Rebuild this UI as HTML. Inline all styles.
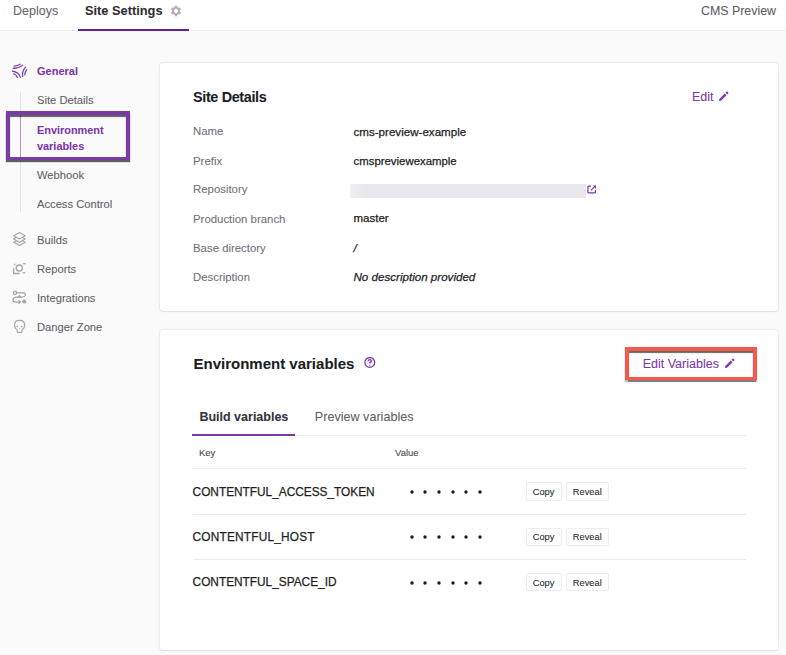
<!DOCTYPE html>
<html><head><meta charset="utf-8"><style>
html,body{margin:0;padding:0;width:786px;height:655px;overflow:hidden;background:#fafafa;font-family:"Liberation Sans",sans-serif;position:relative}
.t{position:absolute;white-space:nowrap;line-height:1;-webkit-text-stroke:0.08px currentColor}
.btn{position:absolute;border:1px solid #ececef;border-radius:2px;background:#fff}
</style></head><body>
<div style="position:absolute;left:0;top:0;width:786px;height:30px;background:#fff;border-bottom:1px solid #eeeef0"></div><div class="t" style="left:13px;top:5.02px;font-size:12.5px;color:#66666e;font-weight:normal;font-style:normal;">Deploys</div>
<div class="t" style="left:85px;top:4.76px;font-size:12.8px;color:#2e2e36;font-weight:bold;font-style:normal;">Site Settings</div>
<div class="t" style="left:701px;top:5.20px;font-size:12.4px;color:#5c5c64;font-weight:normal;font-style:normal;">CMS Preview</div>
<div style="position:absolute;left:78px;top:28.5px;width:111px;height:2px;background:#62239a"></div><svg style="position:absolute;left:170px;top:5px" width="12" height="12" viewBox="-6 -6 12 12"><rect x="-1.3" y="-5.2" width="2.6" height="3" rx="0.5" transform="rotate(0)" fill="#b3b3b8"/><rect x="-1.3" y="-5.2" width="2.6" height="3" rx="0.5" transform="rotate(60)" fill="#b3b3b8"/><rect x="-1.3" y="-5.2" width="2.6" height="3" rx="0.5" transform="rotate(120)" fill="#b3b3b8"/><rect x="-1.3" y="-5.2" width="2.6" height="3" rx="0.5" transform="rotate(180)" fill="#b3b3b8"/><rect x="-1.3" y="-5.2" width="2.6" height="3" rx="0.5" transform="rotate(240)" fill="#b3b3b8"/><rect x="-1.3" y="-5.2" width="2.6" height="3" rx="0.5" transform="rotate(300)" fill="#b3b3b8"/><circle cx="0" cy="0" r="3.1" fill="none" stroke="#b3b3b8" stroke-width="1.9"/></svg><div class="t" style="left:37px;top:66.39px;font-size:11px;color:#7a38a8;font-weight:bold;font-style:normal;">General</div>
<svg style="position:absolute;left:8px;top:58px" width="24" height="24" viewBox="0 0 24 24" fill="none" stroke="#7a38a8" stroke-width="1.2" stroke-linecap="round">
<path d="M6.2 8.1 Q9.5 7.8 12.1 6.2"/><path d="M5.1 10.4 Q10.5 10.5 14.7 7.1"/>
<path d="M4.4 13.2 Q10.5 14 12.5 19.4"/><path d="M5.5 15.8 Q8.3 16.8 9.5 19.4"/>
<path d="M17.6 9.2 Q14 13 14.7 18.3"/><path d="M18.7 11.7 Q16.8 14 16.8 16.8"/>
</svg><div style="position:absolute;left:20px;top:92px;width:1px;height:120px;background:#e2e2e7"></div><div style="position:absolute;left:20px;top:115px;width:1px;height:42px;background:#b68fd2"></div><div class="t" style="left:37px;top:95.22px;font-size:11.2px;color:#5e5e66;font-weight:normal;font-style:normal;">Site Details</div>
<div class="t" style="left:37px;top:124.67px;font-size:10.9px;color:#7a38a8;font-weight:bold;font-style:normal;">Environment</div>
<div class="t" style="left:37px;top:140.67px;font-size:10.9px;color:#7a38a8;font-weight:bold;font-style:normal;">variables</div>
<div class="t" style="left:37px;top:170.02px;font-size:11.2px;color:#5e5e66;font-weight:normal;font-style:normal;">Webhook</div>
<div class="t" style="left:37px;top:198.82px;font-size:11.2px;color:#5e5e66;font-weight:normal;font-style:normal;">Access Control</div>
<div class="t" style="left:37px;top:234.62px;font-size:11.2px;color:#5e5e66;font-weight:normal;font-style:normal;">Builds</div>
<div class="t" style="left:37px;top:263.62px;font-size:11.2px;color:#5e5e66;font-weight:normal;font-style:normal;">Reports</div>
<div class="t" style="left:37px;top:292.92px;font-size:11.2px;color:#5e5e66;font-weight:normal;font-style:normal;">Integrations</div>
<div class="t" style="left:37px;top:321.82px;font-size:11.2px;color:#5e5e66;font-weight:normal;font-style:normal;">Danger Zone</div>
<svg style="position:absolute;left:12px;top:231px" width="15" height="16" viewBox="12 231 15 16" fill="none" stroke="#a4a4aa" stroke-width="1.1" stroke-linejoin="round">
<path d="M19.4 232.4 L25.2 235.7 L19.4 239 L13.6 235.7 Z"/><path d="M16.5 237.35 L13.6 239 L19.4 242.3 L25.2 239 L22.3 237.35"/><path d="M16.5 240.65 L13.6 242.3 L19.4 245.6 L25.2 242.3 L22.3 240.65"/>
</svg><svg style="position:absolute;left:12px;top:261px" width="16" height="15" viewBox="12 261 16 15" fill="none" stroke="#a4a4aa" stroke-width="1.3">
<path d="M13.6 268.2 V273.5 H19.6"/><circle cx="19.3" cy="268.1" r="3.1"/><path d="M14.1 264.4 h1.3"/><path d="M23 263.7 h2.6"/><path d="M22.6 272.8 h2.6"/>
</svg><svg style="position:absolute;left:12px;top:290px" width="16" height="15" viewBox="12 290 16 15" fill="none" stroke="#a4a4aa" stroke-width="1.25" stroke-linecap="round" stroke-linejoin="round">
<circle cx="15" cy="292.8" r="1.6"/><path d="M16.8 292.8 H23.2 Q25.6 293 25.4 295 Q25 297 22 297 H16 Q13 297.5 13 299.7 Q13 302 16 302 H20"/><path d="M19 300.7 L20.4 302 L19 303.3"/><circle cx="24.2" cy="301.5" r="2" fill="#a4a4aa" stroke="none"/><path d="M18.2 297.4 L19.5 295.5 L20.8 297.4"/>
</svg><svg style="position:absolute;left:12px;top:318px" width="16" height="16" viewBox="12 318 16 16" fill="none" stroke="#a4a4aa" stroke-width="1.15" stroke-linejoin="round">
<path d="M17.3 332.3 V329.8 Q14.5 328.4 14.5 325.1 Q14.6 320.3 19.6 320.3 Q24.6 320.3 24.7 325.1 Q24.7 328.4 21.9 329.8 V332.3 Z"/>
<ellipse cx="17.4" cy="326.6" rx="1" ry="0.8" fill="#a4a4aa" stroke="none"/><ellipse cx="21.8" cy="326.6" rx="1" ry="0.8" fill="#a4a4aa" stroke="none"/><path d="M19.6 327.6 l-0.7 1.1 h1.4 z" fill="#a4a4aa" stroke="none"/>
</svg><div style="position:absolute;left:6px;top:111px;width:116px;height:42px;border-style:solid;border-color:#7b3ba6;border-width:4px 4px 3px 4px;box-shadow:0 2px 1px rgba(0,0,0,0.62), inset 0 2px 1px rgba(0,0,0,0.62)"></div><div style="position:absolute;left:160px;top:62.5px;width:618px;height:248.5px;background:#fff;border-radius:3px;box-shadow:0 0 0 1px rgba(20,20,40,0.04), 0 0 2px 1px rgba(0,0,0,0.03), 0 1px 1px rgba(20,20,40,0.05)"></div><div style="position:absolute;left:160px;top:329.5px;width:618px;height:320px;background:#fff;border-radius:3px;box-shadow:0 0 0 1px rgba(20,20,40,0.04), 0 0 2px 1px rgba(0,0,0,0.03), 0 1px 1px rgba(20,20,40,0.05)"></div><div class="t" style="left:193px;top:89.61px;font-size:14.4px;color:#1d1d24;font-weight:bold;font-style:normal;letter-spacing:-0.35px;">Site Details</div>
<div class="t" style="left:692px;top:90.72px;font-size:12.5px;color:#7a38a8;font-weight:normal;font-style:normal;">Edit</div>
<svg style="position:absolute;left:717.6px;top:91px" width="11" height="11" viewBox="0 0 11 11" fill="#7a38a8"><path d="M1 10 L1.3 8 L6.8 2.5 L8.5 4.2 L3 9.7 Z"/><path d="M7.5 1.8 L8.5 0.8 Q9 0.4 9.5 0.8 L10.2 1.5 Q10.6 2 10.2 2.5 L9.2 3.5 Z"/></svg><div class="t" style="left:193px;top:125.65px;font-size:11.4px;color:#707077;font-weight:normal;font-style:normal;">Name</div>
<div class="t" style="left:193px;top:155.85px;font-size:11.4px;color:#707077;font-weight:normal;font-style:normal;">Prefix</div>
<div class="t" style="left:193px;top:184.45px;font-size:11.4px;color:#707077;font-weight:normal;font-style:normal;">Repository</div>
<div class="t" style="left:193px;top:213.55px;font-size:11.4px;color:#707077;font-weight:normal;font-style:normal;">Production branch</div>
<div class="t" style="left:193px;top:242.85px;font-size:11.4px;color:#707077;font-weight:normal;font-style:normal;">Base directory</div>
<div class="t" style="left:193px;top:272.05px;font-size:11.4px;color:#707077;font-weight:normal;font-style:normal;">Description</div>
<div class="t" style="left:353.5px;top:126.38px;font-size:11.6px;color:#1e1e24;font-weight:normal;font-style:normal;-webkit-text-stroke:0.25px currentColor;">cms-preview-example</div>
<div class="t" style="left:353.5px;top:155.85px;font-size:11.4px;color:#1e1e24;font-weight:normal;font-style:normal;-webkit-text-stroke:0.25px currentColor;">cmspreviewexample</div>
<div style="position:absolute;left:350px;top:184px;width:235.5px;height:14px;background:linear-gradient(to right,#f1f0f3 0,#ebe9ee 10px,#e9e7ec 14px)"></div><svg style="position:absolute;left:586px;top:184px" width="11" height="11" viewBox="0 0 11 11" fill="none" stroke="#7a38a8" stroke-width="1.2"><path d="M5 2.2 H2.6 Q1.9 2.2 1.9 2.9 V8.2 Q1.9 8.9 2.6 8.9 H8.7 Q9.4 8.9 9.4 8.2 V6"/><path d="M4.9 6.3 L8.6 2.6"/><path d="M6.8 1.5 H10 V4.7 Z" fill="#7a38a8" stroke="none"/></svg><div class="t" style="left:353.5px;top:213.47px;font-size:11.5px;color:#1e1e24;font-weight:normal;font-style:normal;-webkit-text-stroke:0.25px currentColor;">master</div>
<div class="t" style="left:353.5px;top:242.77px;font-size:11.5px;color:#1e1e24;font-weight:normal;font-style:italic;-webkit-text-stroke:0.25px currentColor;">/</div>
<div class="t" style="left:353.5px;top:271.28px;font-size:11.6px;color:#1e1e24;font-weight:normal;font-style:italic;-webkit-text-stroke:0.25px currentColor;">No description provided</div>
<div class="t" style="left:193.5px;top:356.40px;font-size:15px;color:#1d1d24;font-weight:bold;font-style:normal;">Environment variables</div>
<svg style="position:absolute;left:363px;top:356px" width="14" height="14" viewBox="0 0 14 14" fill="none" stroke="#7a38a8" stroke-width="1.3"><circle cx="6.8" cy="6.4" r="4.9"/><path d="M5.2 5.2 Q5.2 3.6 6.8 3.6 Q8.4 3.6 8.4 5 Q8.4 6 6.8 6.6 V7.6" stroke-width="1.45"/><circle cx="6.8" cy="9.2" r="0.6" fill="#7a38a8" stroke="none"/></svg><div style="position:absolute;left:625px;top:347px;width:124px;height:26px;border-style:solid;border-color:#f35a4d;border-width:4px 4px 3.5px 4px;box-shadow:0 1.5px 1px rgba(0,0,0,0.5), inset 0 2px 1px rgba(0,0,0,0.6)"></div><div class="t" style="left:642.7px;top:358.02px;font-size:12.5px;color:#7a38a8;font-weight:normal;font-style:normal;">Edit Variables</div>
<svg style="position:absolute;left:723.6px;top:357.5px" width="11" height="11" viewBox="0 0 11 11" fill="#7a38a8"><path d="M1 10 L1.3 8 L6.8 2.5 L8.5 4.2 L3 9.7 Z"/><path d="M7.5 1.8 L8.5 0.8 Q9 0.4 9.5 0.8 L10.2 1.5 Q10.6 2 10.2 2.5 L9.2 3.5 Z"/></svg><div class="t" style="left:199.4px;top:411.02px;font-size:12.5px;color:#34343c;font-weight:bold;font-style:normal;">Build variables</div>
<div class="t" style="left:314.8px;top:410.93px;font-size:12.6px;color:#606068;font-weight:normal;font-style:normal;">Preview variables</div>
<div style="position:absolute;left:193px;top:435px;width:553px;height:1px;background:#ebebee"></div><div style="position:absolute;left:192px;top:434px;width:103px;height:2px;background:#7a38a8"></div><div class="t" style="left:199px;top:448.06px;font-size:9.5px;color:#44444c;font-weight:normal;font-style:normal;">Key</div>
<div class="t" style="left:395px;top:448.06px;font-size:9.5px;color:#44444c;font-weight:normal;font-style:normal;">Value</div>
<div style="position:absolute;left:193px;top:468px;width:553px;height:1px;background:#ebebee"></div><div style="position:absolute;left:193px;top:513.5px;width:553px;height:1px;background:#ebebee"></div><div style="position:absolute;left:193px;top:559px;width:553px;height:1px;background:#ebebee"></div><div class="t" style="left:192.6px;top:486.87px;font-size:11.85px;color:#1e1e24;font-weight:normal;font-style:normal;-webkit-text-stroke:0.25px currentColor;">CONTENTFUL_ACCESS_TOKEN</div>
<svg style="position:absolute;left:408.50px;top:489.00px" width="6" height="6"><circle cx="3" cy="3" r="1.7" fill="#1a1a1f"/></svg><svg style="position:absolute;left:422.24px;top:489.00px" width="6" height="6"><circle cx="3" cy="3" r="1.7" fill="#1a1a1f"/></svg><svg style="position:absolute;left:435.98px;top:489.00px" width="6" height="6"><circle cx="3" cy="3" r="1.7" fill="#1a1a1f"/></svg><svg style="position:absolute;left:449.72px;top:489.00px" width="6" height="6"><circle cx="3" cy="3" r="1.7" fill="#1a1a1f"/></svg><svg style="position:absolute;left:463.46px;top:489.00px" width="6" height="6"><circle cx="3" cy="3" r="1.7" fill="#1a1a1f"/></svg><svg style="position:absolute;left:477.20px;top:489.00px" width="6" height="6"><circle cx="3" cy="3" r="1.7" fill="#1a1a1f"/></svg><div class="btn" style="left:526px;top:482.30px;width:34px;height:16.6px"></div><div class="btn" style="left:566px;top:482.30px;width:40.5px;height:16.6px"></div><div class="t" style="left:532.7px;top:488.03px;font-size:9.3px;color:#2a2a30;font-weight:normal;font-style:normal;">Copy</div>
<div class="t" style="left:572.8px;top:488.03px;font-size:9.3px;color:#2a2a30;font-weight:normal;font-style:normal;">Reveal</div>
<div class="t" style="left:192.6px;top:532.07px;font-size:11.85px;color:#1e1e24;font-weight:normal;font-style:normal;letter-spacing:0.2px;-webkit-text-stroke:0.25px currentColor;">CONTENTFUL_HOST</div>
<svg style="position:absolute;left:408.50px;top:534.20px" width="6" height="6"><circle cx="3" cy="3" r="1.7" fill="#1a1a1f"/></svg><svg style="position:absolute;left:422.24px;top:534.20px" width="6" height="6"><circle cx="3" cy="3" r="1.7" fill="#1a1a1f"/></svg><svg style="position:absolute;left:435.98px;top:534.20px" width="6" height="6"><circle cx="3" cy="3" r="1.7" fill="#1a1a1f"/></svg><svg style="position:absolute;left:449.72px;top:534.20px" width="6" height="6"><circle cx="3" cy="3" r="1.7" fill="#1a1a1f"/></svg><svg style="position:absolute;left:463.46px;top:534.20px" width="6" height="6"><circle cx="3" cy="3" r="1.7" fill="#1a1a1f"/></svg><svg style="position:absolute;left:477.20px;top:534.20px" width="6" height="6"><circle cx="3" cy="3" r="1.7" fill="#1a1a1f"/></svg><div class="btn" style="left:526px;top:527.50px;width:34px;height:16.6px"></div><div class="btn" style="left:566px;top:527.50px;width:40.5px;height:16.6px"></div><div class="t" style="left:532.7px;top:533.23px;font-size:9.3px;color:#2a2a30;font-weight:normal;font-style:normal;">Copy</div>
<div class="t" style="left:572.8px;top:533.23px;font-size:9.3px;color:#2a2a30;font-weight:normal;font-style:normal;">Reveal</div>
<div class="t" style="left:192.6px;top:577.47px;font-size:11.85px;color:#1e1e24;font-weight:normal;font-style:normal;-webkit-text-stroke:0.25px currentColor;">CONTENTFUL_SPACE_ID</div>
<svg style="position:absolute;left:408.50px;top:579.60px" width="6" height="6"><circle cx="3" cy="3" r="1.7" fill="#1a1a1f"/></svg><svg style="position:absolute;left:422.24px;top:579.60px" width="6" height="6"><circle cx="3" cy="3" r="1.7" fill="#1a1a1f"/></svg><svg style="position:absolute;left:435.98px;top:579.60px" width="6" height="6"><circle cx="3" cy="3" r="1.7" fill="#1a1a1f"/></svg><svg style="position:absolute;left:449.72px;top:579.60px" width="6" height="6"><circle cx="3" cy="3" r="1.7" fill="#1a1a1f"/></svg><svg style="position:absolute;left:463.46px;top:579.60px" width="6" height="6"><circle cx="3" cy="3" r="1.7" fill="#1a1a1f"/></svg><svg style="position:absolute;left:477.20px;top:579.60px" width="6" height="6"><circle cx="3" cy="3" r="1.7" fill="#1a1a1f"/></svg><div class="btn" style="left:526px;top:572.90px;width:34px;height:16.6px"></div><div class="btn" style="left:566px;top:572.90px;width:40.5px;height:16.6px"></div><div class="t" style="left:532.7px;top:578.63px;font-size:9.3px;color:#2a2a30;font-weight:normal;font-style:normal;">Copy</div>
<div class="t" style="left:572.8px;top:578.63px;font-size:9.3px;color:#2a2a30;font-weight:normal;font-style:normal;">Reveal</div>

</body></html>
